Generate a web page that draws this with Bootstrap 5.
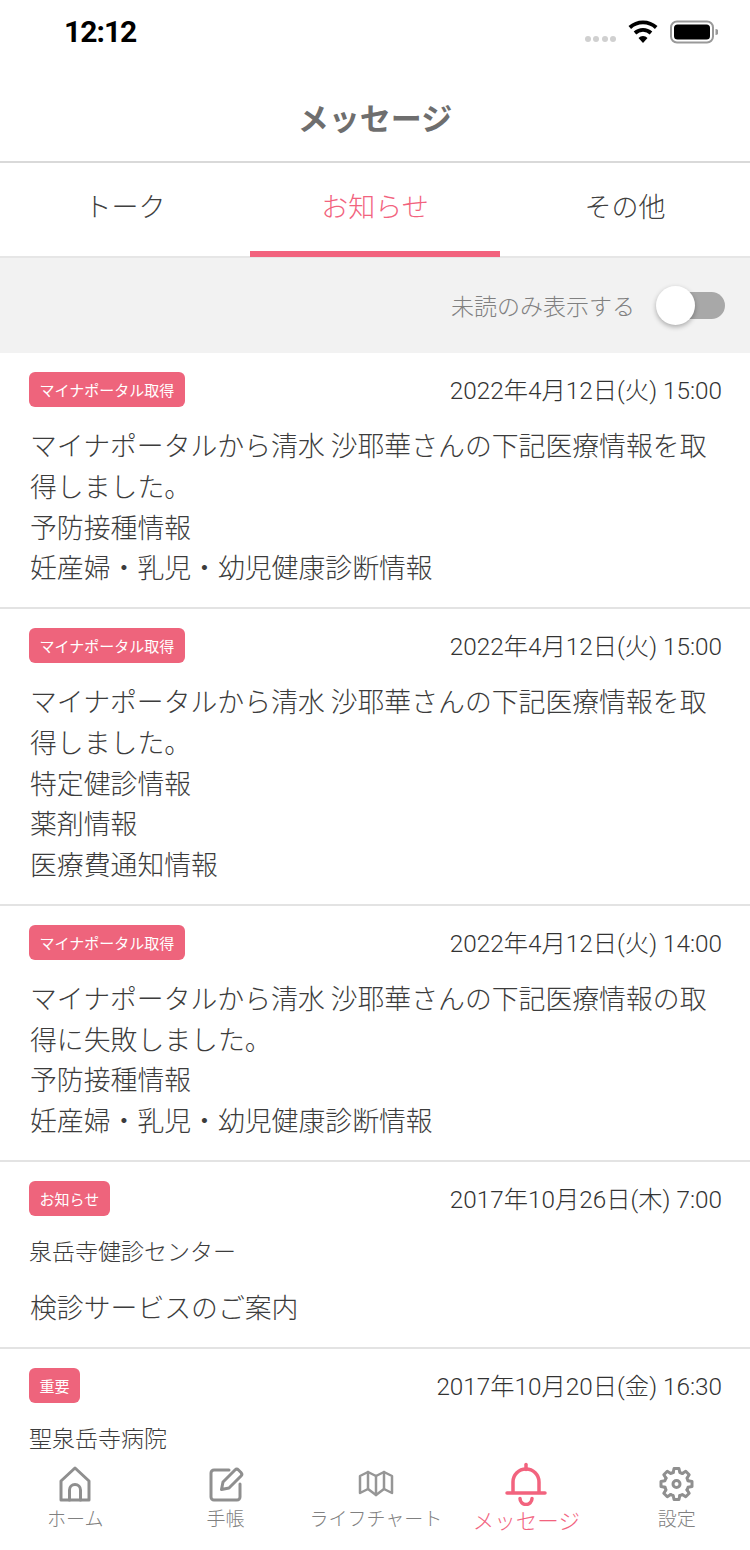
<!DOCTYPE html>
<html lang="ja">
<head>
<meta charset="utf-8">
<title>メッセージ</title>
<link href="https://cdn.jsdelivr.net/npm/bootstrap@5.3.0/dist/css/bootstrap.min.css" rel="stylesheet">
<style>
html,body{margin:0;background:#fff}
body{font-family:"Noto Sans CJK JP","Noto Sans",sans-serif;font-weight:300;color:#3c3c3c;width:750px;height:1550px;overflow:hidden}
.app-shell{width:750px;height:1550px;overflow:hidden}
.status-strip{height:68px;padding:0 32px 4px 64px}
.clock{font-family:Roboto,"Liberation Sans",sans-serif;font-weight:700;font-size:30px;letter-spacing:-1px;color:#000;line-height:1}
.sig-dots{gap:2.500px;padding-top:14px;margin-right:12px}
.sig-dot{width:6px;height:6px;border-radius:50%;background:#d0d0d0}
.wifi-glyph{margin-right:12px}
.title-bar{height:95px;border-bottom:2px solid #d9d9d9;font-size:31px;font-weight:700;color:#6e6e6e;line-height:1;padding-top:3px}
.tab-strip{height:95px;border-bottom:2px solid #e6e6e6}
.tab-cell{font-size:27px;color:#404040;padding-bottom:2px;border-bottom:6px solid transparent;margin-bottom:-1px}
.tab-cell.is-on{color:#f2637e;border-bottom-color:#f2637e}
.filter-row{height:95px;background:#f2f2f2;padding:0 25px 1px 0;gap:28px;color:#808080;font-size:23px}
.switch-track{width:62px;height:27px;background:#a8a8a8;border-radius:14px;position:relative}
.switch-knob{position:absolute;left:-7px;top:-6px;width:39px;height:39px;border-radius:50%;background:#fff;box-shadow:0 2px 5px rgba(0,0,0,.3)}
.msg-list{min-height:0;overflow:hidden}
.msg-item{border-bottom:2px solid #e3e3e3;padding:19px 28px 19px 29px}
.msg-tag{background:#ee647c;color:#fff;font-size:15px;font-weight:400;line-height:35px;height:35px;padding:0 10.500px;border-radius:6px}
.msg-date{font-family:Roboto,"Noto Sans CJK JP",sans-serif;font-weight:300;font-size:24.300px;color:#333;line-height:35px;padding-top:1px}
.msg-body{font-size:26.850px;line-height:40.750px;margin-top:17px;padding-left:1px}
.msg-sender{font-size:23px;line-height:30px;margin-top:18px}
.msg-subject{font-size:26.850px;line-height:40.750px;margin-top:22.500px;padding-left:1px}
.foot-nav{height:96px;background:#fff}
.foot-cell{flex:0 0 150.400px;color:#808080;font-size:19px;line-height:24px;padding-top:8px}
.foot-cell.is-on{color:#f2637e;font-size:21.500px}
.foot-cell.is-on span{margin-top:2px}
.foot-cell svg{display:block}
</style>
</head>
<body>
<div class="app-shell d-flex flex-column">
  <div class="status-strip d-flex justify-content-between align-items-center flex-shrink-0">
    <div class="clock">12:12</div>
    <div class="d-flex align-items-center">
      <div class="sig-dots d-flex">
        <span class="sig-dot"></span><span class="sig-dot"></span><span class="sig-dot"></span><span class="sig-dot"></span>
      </div>
      <svg class="wifi-glyph" width="30" height="24" viewBox="0 0 30 24"><path d="M15 23l-4.500-5a6.200 6.200 0 0 1 9 0z" fill="#000"/><path d="M7 13a12 12 0 0 1 16 0M1.800 7.500a19.500 19.500 0 0 1 26.400 0" fill="none" stroke="#000" stroke-width="3.800"/></svg>
      <svg width="48" height="24" viewBox="0 0 48 24"><rect x="1" y="1.500" width="42" height="21" rx="6" fill="none" stroke="#999" stroke-width="2"/><rect x="4" y="4.500" width="36" height="15" rx="3.500" fill="#000"/><path d="M45.500 9a3 3 0 0 1 0 6z" fill="#999"/></svg>
    </div>
  </div>
  <div class="title-bar d-flex align-items-center justify-content-center flex-shrink-0">メッセージ</div>
  <div class="tab-strip d-flex flex-shrink-0">
    <div class="tab-cell flex-fill w-25 d-flex align-items-center justify-content-center">トーク</div>
    <div class="tab-cell is-on flex-fill w-25 d-flex align-items-center justify-content-center">お知らせ</div>
    <div class="tab-cell flex-fill w-25 d-flex align-items-center justify-content-center">その他</div>
  </div>
  <div class="filter-row d-flex align-items-center justify-content-end flex-shrink-0">
    <span>未読のみ表示する</span>
    <div class="switch-track"><div class="switch-knob"></div></div>
  </div>
  <div class="msg-list flex-grow-1">
    <div class="msg-item">
      <div class="d-flex justify-content-between"><span class="msg-tag">マイナポータル取得</span><span class="msg-date">2022年4月12日(火) 15:00</span></div>
      <div class="msg-body">マイナポータルから清水 沙耶華さんの下記医療情報を取得しました。<br>予防接種情報<br>妊産婦・乳児・幼児健康診断情報</div>
    </div>
    <div class="msg-item">
      <div class="d-flex justify-content-between"><span class="msg-tag">マイナポータル取得</span><span class="msg-date">2022年4月12日(火) 15:00</span></div>
      <div class="msg-body">マイナポータルから清水 沙耶華さんの下記医療情報を取得しました。<br>特定健診情報<br>薬剤情報<br>医療費通知情報</div>
    </div>
    <div class="msg-item">
      <div class="d-flex justify-content-between"><span class="msg-tag">マイナポータル取得</span><span class="msg-date">2022年4月12日(火) 14:00</span></div>
      <div class="msg-body">マイナポータルから清水 沙耶華さんの下記医療情報の取得に失敗しました。<br>予防接種情報<br>妊産婦・乳児・幼児健康診断情報</div>
    </div>
    <div class="msg-item">
      <div class="d-flex justify-content-between"><span class="msg-tag">お知らせ</span><span class="msg-date">2017年10月26日(木) 7:00</span></div>
      <div class="msg-sender">泉岳寺健診センター</div>
      <div class="msg-subject">検診サービスのご案内</div>
    </div>
    <div class="msg-item">
      <div class="d-flex justify-content-between"><span class="msg-tag">重要</span><span class="msg-date">2017年10月20日(金) 16:30</span></div>
      <div class="msg-sender">聖泉岳寺病院</div>
    </div>
  </div>
  <div class="foot-nav d-flex flex-shrink-0">
    <div class="foot-cell d-flex flex-column align-items-center">
      <svg width="50" height="44" viewBox="0 0 50 44" fill="none" stroke="#8f8f8f" stroke-width="3" stroke-linejoin="round" stroke-linecap="round"><path d="M11 38V19L25 6l14 13v19z"/><path d="M19.500 38V28a5.500 5.500 0 0 1 11 0v10"/></svg>
      <span>ホーム</span>
    </div>
    <div class="foot-cell d-flex flex-column align-items-center">
      <svg width="50" height="44" viewBox="0 0 50 44" fill="none" stroke="#8f8f8f" stroke-width="3" stroke-linejoin="round" stroke-linecap="round"><path d="M28 8H13a3 3 0 0 0-3 3v24a3 3 0 0 0 3 3h23a3 3 0 0 0 3-3V22"/><path d="M20.500 27.500L22 20 34 8a2.500 2.500 0 0 1 3.500 0l2.500 2.500a2.500 2.500 0 0 1 0 3.500L28 26z"/></svg>
      <span>手帳</span>
    </div>
    <div class="foot-cell d-flex flex-column align-items-center">
      <svg width="50" height="44" viewBox="0 0 50 44" fill="none" stroke="#969696" stroke-width="2.500" stroke-linejoin="round" stroke-linecap="round"><path d="M9 14l8-4 8 4 8-4 8 4v17l-8-4-8 6-8-6-8 4z"/><path d="M17 10v17M25 14v19M33 10v17"/></svg>
      <span>ライフチャート</span>
    </div>
    <div class="foot-cell is-on d-flex flex-column align-items-center">
      <svg width="50" height="44" viewBox="0 0 50 44" fill="none" stroke="#f2637e" stroke-width="3.500" stroke-linecap="round"><path d="M25 2.500v5"/><path d="M12 30.500V20a13 13 0 0 1 26 0v10.500"/><path d="M6 31h38"/><path d="M19 36.500a6 6 0 0 0 12 0"/></svg>
      <span>メッセージ</span>
    </div>
    <div class="foot-cell d-flex flex-column align-items-center">
      <svg width="50" height="44" viewBox="0 0 50 44" fill="none" stroke="#8f8f8f" stroke-width="3" stroke-linejoin="round" stroke-linecap="round"><circle cx="24.500" cy="22" r="3.500"/><g transform="translate(24.500 22)"><path d="M-3.310-11.530L-2.460-15.500H2.460L3.310-11.530A12 12 0 0 1 5.820-10.500"/><path transform="rotate(45)" d="M-3.310-11.530L-2.460-15.500H2.460L3.310-11.530A12 12 0 0 1 5.820-10.500"/><path transform="rotate(90)" d="M-3.310-11.530L-2.460-15.500H2.460L3.310-11.530A12 12 0 0 1 5.820-10.500"/><path transform="rotate(135)" d="M-3.310-11.530L-2.460-15.500H2.460L3.310-11.530A12 12 0 0 1 5.820-10.500"/><path transform="rotate(180)" d="M-3.310-11.530L-2.460-15.500H2.460L3.310-11.530A12 12 0 0 1 5.820-10.500"/><path transform="rotate(225)" d="M-3.310-11.530L-2.460-15.500H2.460L3.310-11.530A12 12 0 0 1 5.820-10.500"/><path transform="rotate(270)" d="M-3.310-11.530L-2.460-15.500H2.460L3.310-11.530A12 12 0 0 1 5.820-10.500"/><path transform="rotate(315)" d="M-3.310-11.530L-2.460-15.500H2.460L3.310-11.530A12 12 0 0 1 5.820-10.500"/></g></svg>
      <span>設定</span>
    </div>
  </div>
</div>
<script src="https://cdn.jsdelivr.net/npm/bootstrap@5.3.0/dist/js/bootstrap.bundle.min.js"></script>
</body>
</html>
